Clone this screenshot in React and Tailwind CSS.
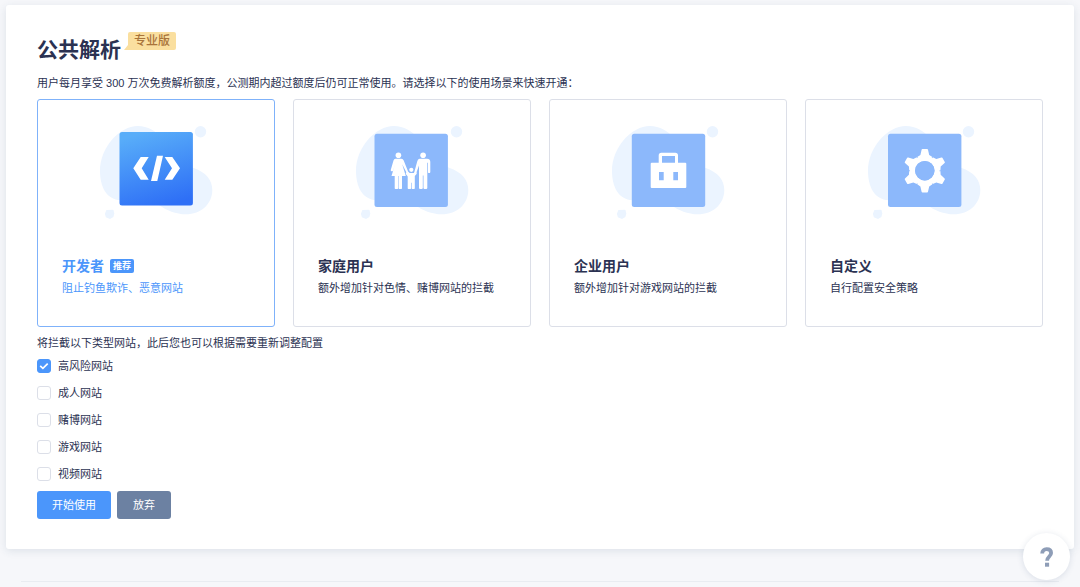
import React, { useState } from 'react';

const categories = ['高风险网站', '成人网站', '赌博网站', '游戏网站', '视频网站'];

const scenes = [
  { id: 'developer', name: '开发者', desc: '阻止钓鱼欺诈、恶意网站', recommended: true, blocked: ['高风险网站'] },
  { id: 'family', name: '家庭用户', desc: '额外增加针对色情、赌博网站的拦截', blocked: ['高风险网站', '成人网站', '赌博网站'] },
  { id: 'company', name: '企业用户', desc: '额外增加针对游戏网站的拦截', blocked: ['高风险网站', '游戏网站'] },
  { id: 'custom', name: '自定义', desc: '自行配置安全策略', blocked: [] },
];

const CodeGlyph = () => (
  <g fill="#fff">
    <path d="M37.3 48.3 44.7 37h8L45.7 48.3l7 11.4h-8z" />
    <path d="M84 48.3 76.3 37h-7.6L76 48.3l-7.3 11.4h7.6z" />
    <path d="M61 35.7h6L61.3 61H55z" />
  </g>
);

const FamilyGlyph = () => (
  <g fill="#fff">
    <circle cx="46.4" cy="35.2" r="2.8" />
    <path d="M43.4 38.8h6q1.7 0 2.3 1.8l4.4 10.8 2 2.2v1.8l-3-1.6-4.9-9.6 3.6 11.9H50v12.2q0 .6-.7.6h-2q-.7 0-.7-.6V56.1h-.5v12.2q0 .6-.7.6h-2q-.7 0-.7-.6V56.1h-3.2l3.5-11.6-2 6.2q-.6 1-1.6.5-.9-.5-.6-1.5l2.7-9.1q.5-1.8 1.9-1.8z" />
    <circle cx="59.3" cy="49.8" r="2.1" />
    <path d="m54.5 52 2.3 1h5l2.4-1 .6 1.7-2 2.4v12.2q0 .6-.7.6h-1.8q-.6 0-.6-.6v-5.5h-.6v5.5q0 .6-.7.6h-2q-.7 0-.7-.6V56.4l-2-2.6z" />
    <circle cx="71.1" cy="35.2" r="2.8" />
    <path d="M67.5 38.8h7.6q3 0 3.2 3v10.1q0 1.2-1.2 1.2T76 51.9v-9.1h-.7v25.3q0 .8-.8.8h-2.2q-.8 0-.8-.8V55.5h-.7v12.6q0 .8-.8.8h-2.2q-.8 0-.8-.8V45.5l-3.1 8.6-2.3 1.4-.4-1.7 1-1.2 3-11.1q.6-2.7 2.3-2.7z" />
  </g>
);

const BriefcaseGlyph = () => (
  <path
    fill="#fff"
    fillRule="evenodd"
    d="M43.7 42.7h7v-7.3q0-2.7 2.7-2.7h13.9q2.7 0 2.7 2.7v7.3h7.3q1 0 1 1V67q0 1-1 1H43.7q-1 0-1-1V43.7q0-1 1-1zM54 42.7h13V36H54zM51 52v8.3h4.7V52zM65.3 52v8.3H70V52z"
  />
);

const GearGlyph = () => (
  <g transform="translate(60.8 50.7)">
    <circle r="12.3" fill="none" stroke="#fff" strokeWidth="5.2" />
    <g fill="#fff">
      {[0, 60, 120, 180, 240, 300].map((angle) => (
        <path key={angle} transform={`rotate(${angle})`} d="M-2.4-21.7h4.8q.6 0 .8.7l1.2 5.2 3.2 2.2-4 2.8h-7.2l-4-2.8 3.2-2.2 1.2-5.2q.2-.7.8-.7z" />
      ))}
    </g>
    <circle r="9.7" fill="#8cb8fb" />
  </g>
);

const glyphs = {
  developer: CodeGlyph,
  family: FamilyGlyph,
  company: BriefcaseGlyph,
  custom: GearGlyph,
};

// left edge of the tile inside the drawing
const tileX = { developer: 23.5, family: 22.5, company: 23.8, custom: 24 };

const SceneArt = ({ id, active }) => {
  const Glyph = glyphs[id];
  return (
    <svg className="mx-auto block" width="120" height="100" viewBox="0 0 120 100" aria-hidden="true">
      <defs>
        <linearGradient id={`tile-${id}`} x1="0.35" y1="0" x2="0.65" y2="1">
          <stop offset="0" stopColor="#58adf9" />
          <stop offset="1" stopColor="#2e6ff6" />
        </linearGradient>
      </defs>
      <g fill="#ebf4ff">
        <path d="M41.7 6C52 6 60 11 66 18C75 30 85 43 97 47.7C110 52 116.3 60 116.3 70C116.3 84 105 94.3 90 94.3C80 94.3 70 90 64 85.7C50 78 35 81 22 80C10 78 4 66 4 51C4 27 24 6 41.7 6Z" />
        <circle cx="104.5" cy="11.7" r="5.7" />
        <path d="M10.4 90 16.8 89.7Q17.4 89.8 17.6 90.4L18.3 93.4 17.4 97 14 98.9 9.8 97.3 8.9 93.8Z" />
      </g>
      <rect
        x={tileX[id]}
        y={active ? 12 : 13.7}
        width="73.4"
        height="73.4"
        rx="2.5"
        fill={active ? `url(#tile-${id})` : '#8cb8fb'}
      />
      <Glyph />
    </svg>
  );
};

const SceneCard = ({ scene, active, onSelect }) => {
  return (
    <button
      type="button"
      aria-pressed={active}
      onClick={() => onSelect(scene)}
      className={`cursor-pointer rounded-[3px] border bg-white px-6 pt-5 pb-[30px] text-left ${
        active ? 'border-[#7fb2fa] text-[#4b96fb]' : 'border-[#dcdfe8] text-[#2b3252]'
      }`}
    >
      <SceneArt id={scene.id} active={active} />
      <div className="mt-9 flex items-center gap-1.5 leading-5">
        <span className="text-[14px] font-bold">{scene.name}</span>
        {scene.recommended && (
          <span className="rounded-xs bg-[#4b96fb] px-[3px] text-[9px] leading-[14px] font-bold text-white">推荐</span>
        )}
      </div>
      <p className="mt-1 text-[11px] leading-4">{scene.desc}</p>
    </button>
  );
};

const App = () => {
  const [selected, setSelected] = useState('developer');
  const [blocked, setBlocked] = useState(['高风险网站']);

  const selectScene = (scene) => {
    setSelected(scene.id);
    setBlocked(scene.blocked);
  };

  const toggle = (name) => {
    setBlocked(blocked.includes(name) ? blocked.filter((b) => b !== name) : [...blocked, name]);
  };

  return (
    <div
      lang="zh-CN"
      className="min-h-screen bg-[#f6f7fa] px-1.5 pt-[5px] font-['Liberation_Sans','Noto_Sans_CJK_SC',sans-serif] text-[11px] text-[#2b3252]"
    >
      <main className="rounded-[3px] bg-white px-[31px] pt-[27px] pb-[30px] shadow-[0_2px_8px_rgba(40,70,110,0.12)]">
        <header className="flex items-start gap-[7px]">
          <h1 className="text-[21px] leading-9 font-bold">公共解析</h1>
          <span className="relative rounded-xs bg-[#fadf9f] px-1.5 text-[12px] leading-[18px] font-medium text-[#a9743a]">
            专业版
            <svg className="absolute bottom-0 -left-1" width="6" height="6" viewBox="0 0 6 6" aria-hidden="true">
              <path d="M4 0v1L0 6h6V0z" fill="#fadf9f" />
            </svg>
          </span>
        </header>
        <p className="mt-[7px] leading-4">
          用户每月享受 300 万次免费解析额度，公测期内超过额度后仍可正常使用。请选择以下的使用场景来快速开通：
        </p>

        <div className="mt-2 grid grid-cols-4 gap-[18px]">
          {scenes.map((scene) => (
            <SceneCard key={scene.id} scene={scene} active={selected === scene.id} onSelect={selectScene} />
          ))}
        </div>

        <fieldset className="mt-2">
          <legend className="leading-4">将拦截以下类型网站，此后您也可以根据需要重新调整配置</legend>
          <div className="mt-[7px] flex flex-col items-start gap-[11px]">
            {categories.map((name) => (
              <label key={name} className="flex cursor-pointer items-center gap-[7px] leading-4">
                <span className="grid">
                  <input
                    type="checkbox"
                    checked={blocked.includes(name)}
                    onChange={() => toggle(name)}
                    className="peer col-start-1 row-start-1 size-3.5 appearance-none rounded-[3px] border border-[#dcdfe8] bg-white checked:border-[#4b96fb] checked:bg-[#4b96fb]"
                  />
                  <svg
                    className="pointer-events-none invisible col-start-1 row-start-1 size-3.5 peer-checked:visible"
                    viewBox="0 0 14 14"
                    fill="none"
                    stroke="#fff"
                    strokeWidth="1.7"
                    aria-hidden="true"
                  >
                    <path d="m3.2 6.9 2.7 2.5 4.8-4.7" />
                  </svg>
                </span>
                {name}
              </label>
            ))}
          </div>
        </fieldset>

        <div className="mt-[9px] flex gap-1.5">
          <button type="button" className="h-7 cursor-pointer rounded-[3px] bg-[#4b96fb] px-[15px] text-white">
            开始使用
          </button>
          <button type="button" className="h-7 cursor-pointer rounded-[3px] bg-[#6c81a2] px-4 text-white">
            放弃
          </button>
        </div>
      </main>

      <hr className="mx-[15px] mt-8 border-[#e9ecf1]" />

      <button
        type="button"
        aria-label="帮助"
        className="fixed right-2.5 bottom-[7px] grid size-[47px] cursor-pointer place-items-center rounded-full bg-white shadow-[0_1px_6px_rgba(40,70,110,0.14)]"
      >
        <svg width="14" height="20" viewBox="0 0 14 20" fill="none" aria-hidden="true">
          <path d="M2.2 6.6C2.2 3.8 3.9 2.2 6.6 2.2s4.5 1.4 4.5 3.9c0 3.3-4 3.6-4 7.6" stroke="#8e9db7" strokeWidth="3.8" />
          <path d="M5 15.7h4.1v4H5z" fill="#8e9db7" />
        </svg>
      </button>
    </div>
  );
};

export default App;
